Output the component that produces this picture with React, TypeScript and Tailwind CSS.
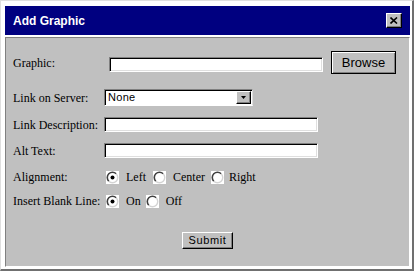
import React from "react";

const serif = { fontFamily: '"Liberation Serif", "Times New Roman", serif' };
const sans = { fontFamily: '"Liberation Sans", Arial, sans-serif' };

function Radio({ checked }: { checked?: boolean }) {
  return (
    <svg width="13" height="13" viewBox="0 0 13 13" className="shrink-0">
      <rect x="0" y="0" width="13" height="13" fill="#ffffff" />
      <path d="M10.2 2.8 A5 5 0 0 0 2.8 10.2" fill="none" stroke="#404040" strokeWidth="1.6" />
      <path d="M2.8 10.2 A5 5 0 0 0 10.2 2.8" fill="none" stroke="#d4d4d4" strokeWidth="1.4" />
      {checked && <circle cx="6.5" cy="6.5" r="2" fill="#000" />}
    </svg>
  );
}

function TextBox({ className = "" }: { className?: string }) {
  return (
    <div
      className={`h-[15px] bg-white border border-t-[#808080] border-l-[#808080] border-b-[#ffffff] border-r-[#ffffff] shadow-[inset_1px_1px_0_#000,inset_-1px_-1px_0_#dfdfdf] ${className}`}
    />
  );
}

function Label({ children }: { children: React.ReactNode }) {
  return (
    <div className="w-[91px] shrink-0 text-[12px] leading-none text-black" style={serif}>
      {children}
    </div>
  );
}

export default function App() {
  return (
    <div className="w-[419px] h-[274px] bg-white">
      <div className="w-[414px] h-[271px] border-t border-l border-t-[#dfdfdf] border-l-[#dfdfdf] border-b-2 border-r-2 border-b-[#707070] border-r-[#707070] pt-[5px] pl-[4px] pr-[1px] flex flex-col">
        {/* title bar */}
        <div className="h-[29px] w-[405px] bg-[#000080] flex items-center justify-between pl-[8px] pr-[8px]">
          <span className="text-white text-[12px] font-bold" style={sans}>
            Add Graphic
          </span>
          <div className="w-[16px] h-[15px] bg-[#c0c0c0] border border-t-white border-l-white border-b-black border-r-black shadow-[inset_-1px_-1px_0_#808080] flex items-center justify-center">
            <svg width="8" height="7" viewBox="0 0 8 7">
              <path d="M0.5 0.5 L7 6.5 M7 0.5 L0.5 6.5" stroke="#000" strokeWidth="1.6" />
            </svg>
          </div>
        </div>

        {/* form panel */}
        <div className="mt-[2px] w-[405px] h-[230px] bg-[#c0c0c0] border border-t-[#808080] border-l-[#808080] border-b-white border-r-white pl-[7px] pt-[13px] flex flex-col">
          <div className="flex items-center h-[23px]">
            <Label>Graphic:</Label>
            <TextBox className="ml-[5px] mt-[3px] w-[214px]" />
            <div
              className="ml-[8px] w-[65px] h-[23px] border border-black bg-[#c0c0c0] shadow-[inset_1px_1px_0_#fff,inset_-1px_-1px_0_#808080] flex items-center justify-center text-[13px] text-black"
              style={sans}
            >
              Browse
            </div>
          </div>

          <div className="flex items-center h-[17px] mt-[15px]">
            <Label>Link on Server:</Label>
            <div className="w-[149px] h-[17px] bg-white border border-t-[#808080] border-l-[#808080] border-b-white border-r-[#dfdfdf] shadow-[inset_1px_1px_0_#000] flex items-center justify-between pl-[3px] pr-[1px]">
              <span className="text-[11px] leading-none tracking-[0.3px] text-black" style={sans}>
                None
              </span>
              <div className="w-[15px] h-[13px] bg-[#c0c0c0] border border-t-white border-l-white border-b-black border-r-black shadow-[inset_-1px_-1px_0_#808080] flex items-center justify-center">
                <svg width="5" height="3" viewBox="0 0 5 3">
                  <path d="M0 0 H5 L2.5 3 Z" fill="#000" />
                </svg>
              </div>
            </div>
          </div>

          <div className="flex items-center h-[15px] mt-[11px]">
            <Label>Link Description:</Label>
            <TextBox className="w-[214px]" />
          </div>

          <div className="flex items-center h-[15px] mt-[11px]">
            <Label>Alt Text:</Label>
            <TextBox className="w-[214px]" />
          </div>

          <div className="flex items-center h-[14px] mt-[12px] text-[12px] leading-none text-black" style={serif}>
            <Label>Alignment:</Label>
            <div className="ml-[2px] flex items-center">
              <Radio checked />
              <span className="ml-[7px]">Left</span>
              <span className="ml-[7px]"><Radio /></span>
              <span className="ml-[7px]">Center</span>
              <span className="ml-[6px]"><Radio /></span>
              <span className="ml-[5px]">Right</span>
            </div>
          </div>

          <div className="flex items-center h-[14px] mt-[10px] text-[12px] leading-none text-black" style={serif}>
            <Label>Insert Blank Line:</Label>
            <div className="ml-[2px] flex items-center">
              <Radio checked />
              <span className="ml-[7px]">On</span>
              <span className="ml-[5px]"><Radio /></span>
              <span className="ml-[7px]">Off</span>
            </div>
          </div>

          <div className="flex justify-center mt-[24px] pr-[7px]">
            <div
              className="w-[51px] h-[17px] bg-[#c0c0c0] border border-t-white border-l-white border-b-black border-r-black shadow-[inset_-1px_-1px_0_#808080] flex items-center justify-center text-[11px] tracking-[0.6px] text-black"
              style={sans}
            >
              Submit
            </div>
          </div>
        </div>
      </div>
    </div>
  );
}
